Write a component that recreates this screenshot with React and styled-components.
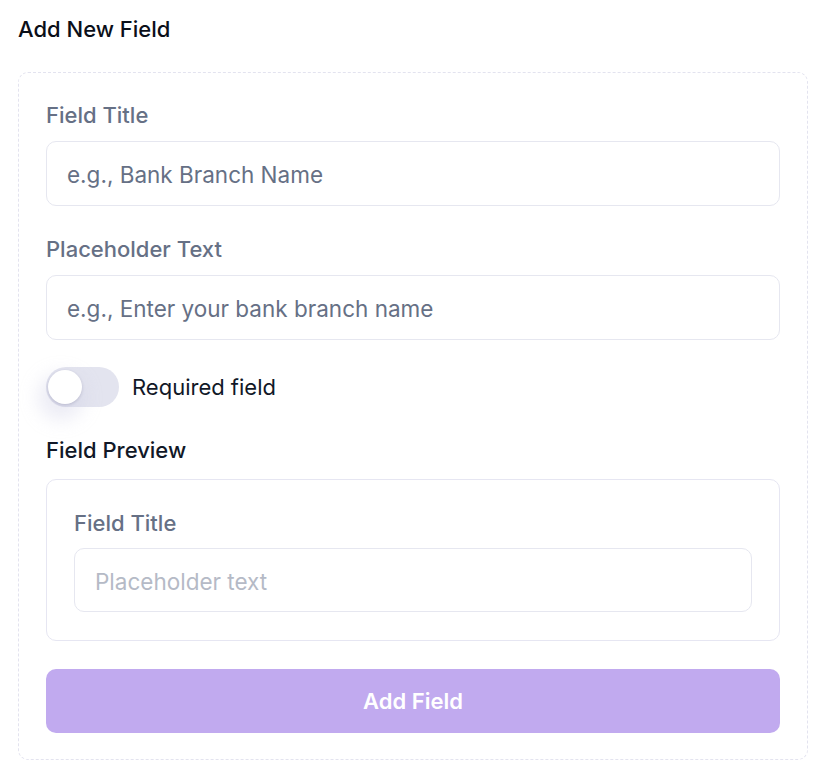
import React, { useState } from "react";
import styled, { createGlobalStyle } from "styled-components";

const GlobalStyle = createGlobalStyle`
    body {
        margin: 0;
        background: #ffffff;
        font-family: Inter, "Noto Sans", "Liberation Sans", sans-serif;
        -webkit-font-smoothing: antialiased;
    }
`;

const Page = styled.div`
    padding: 15px 22px 14px 18px;
`;

const Heading = styled.h2`
    margin: 0 0 29px;
    font-size: 22px;
    line-height: 28px;
    font-weight: 500;
    color: #0b0f19;
`;

const Panel = styled.div`
    border: 1.5px dashed #e3e3ef;
    border-radius: 10px;
    padding: 28px 27px 26px 27px;
    display: flex;
    flex-direction: column;
`;

const Label = styled.label`
    display: block;
    font-size: 22px;
    line-height: 28px;
    font-weight: 500;
    color: ${(p) => (p.$dark ? "#111827" : "#667085")};
    margin-bottom: ${(p) => p.$gap || 12}px;
`;

const Input = styled.input`
    box-sizing: border-box;
    width: 100%;
    height: ${(p) => p.$h || 65}px;
    padding: 2px 20px 0;
    border: 1.5px solid #e6e7f0;
    border-radius: 10px;
    font-family: inherit;
    font-size: 22.5px;
    color: #111827;
    background: #fff;
    outline: none;
    margin-bottom: ${(p) => p.$mb || 0}px;

    &::placeholder {
        color: ${(p) => (p.$muted ? "#b5bac6" : "#667085")};
    }
`;

const ToggleRow = styled.div`
    display: flex;
    align-items: center;
    gap: 13px;
    margin: 27px 0 29px;
`;

const Track = styled.button`
    position: relative;
    width: 73px;
    height: 40px;
    border: none;
    padding: 0;
    border-radius: 20px;
    background: ${(p) => (p.$on ? "#a78bec" : "#e3e4ef")};
    cursor: pointer;
    flex-shrink: 0;
`;

const Thumb = styled.span`
    position: absolute;
    top: 3px;
    left: ${(p) => (p.$on ? 36 : 2)}px;
    width: 34px;
    height: 34px;
    border-radius: 50%;
    background: #fff;
    box-shadow: 0 1px 3px rgba(40, 40, 80, 0.18),
        -4px 10px 18px 6px rgba(200, 200, 225, 0.35);
`;

const ToggleText = styled.span`
    font-size: 22px;
    line-height: 28px;
    color: #111827;
`;

const PreviewBox = styled.div`
    border: 1.5px solid #e6e6f2;
    border-radius: 10px;
    padding: 29px 27px 28px 27px;
    margin-bottom: 28px;
`;

const SubmitButton = styled.button`
    height: 64px;
    width: 100%;
    border: none;
    border-radius: 10px;
    background: #c1aaef;
    color: #ffffff;
    font-family: inherit;
    font-size: 22px;
    font-weight: 600;
    cursor: not-allowed;
`;

export default function App() {
    const [title, setTitle] = useState("");
    const [placeholder, setPlaceholder] = useState("");
    const [required, setRequired] = useState(false);

    return (
        <Page>
            <GlobalStyle />
            <Heading>Add New Field</Heading>
            <Panel>
                <Label>Field Title</Label>
                <Input
                    $mb={29}
                    placeholder="e.g., Bank Branch Name"
                    value={title}
                    onChange={(e) => setTitle(e.target.value)}
                />

                <Label>Placeholder Text</Label>
                <Input
                    placeholder="e.g., Enter your bank branch name"
                    value={placeholder}
                    onChange={(e) => setPlaceholder(e.target.value)}
                />

                <ToggleRow>
                    <Track
                        type="button"
                        $on={required}
                        onClick={() => setRequired(!required)}
                    >
                        <Thumb $on={required} />
                    </Track>
                    <ToggleText>Required field</ToggleText>
                </ToggleRow>

                <Label $dark $gap={15}>
                    Field Preview
                </Label>
                <PreviewBox>
                    <Label $gap={11}>
                        {(title || "Field Title") + (required ? " *" : "")}
                    </Label>
                    <Input
                        $muted
                        $h={64}
                        readOnly
                        placeholder={placeholder || "Placeholder text"}
                    />
                </PreviewBox>

                <SubmitButton type="button" disabled={!title}>
                    Add Field
                </SubmitButton>
            </Panel>
        </Page>
    );
}
